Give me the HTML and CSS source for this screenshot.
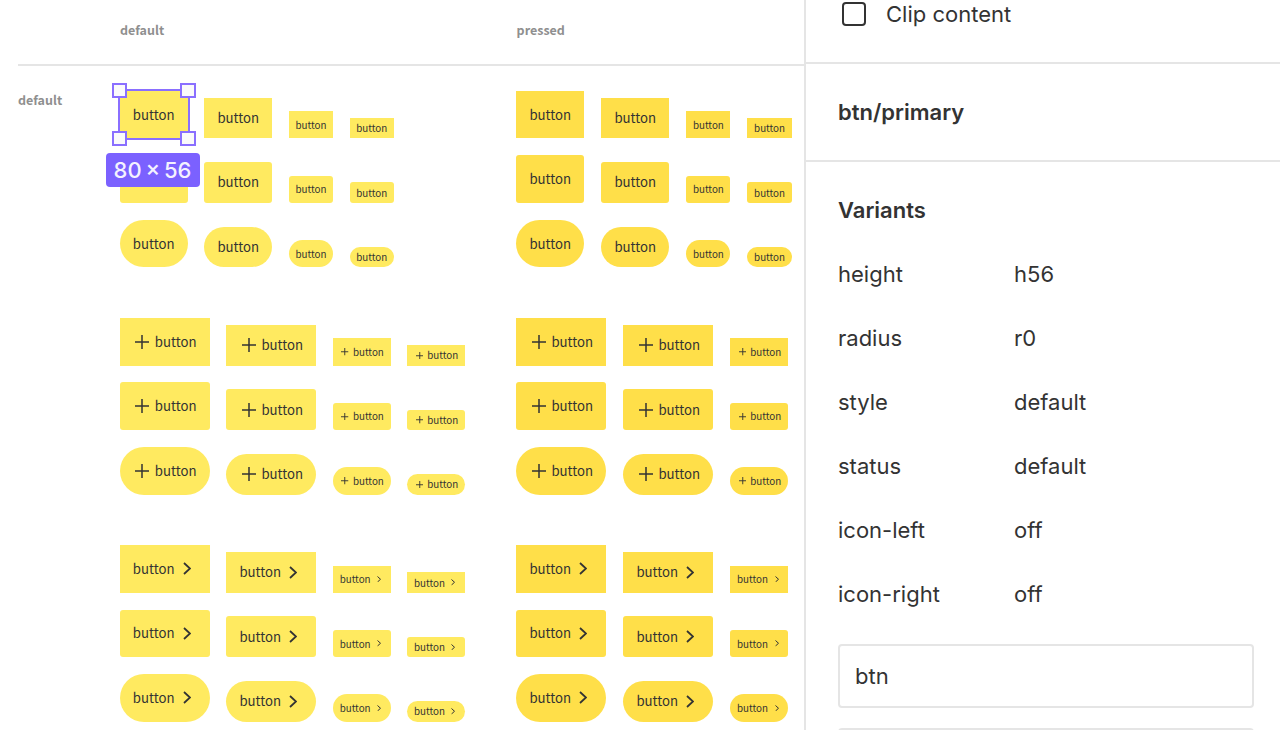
FILE: index.html
```html
<!DOCTYPE html>
<html>
<head>
<title>btn/primary</title>
<link rel="stylesheet" href="styles.css">
</head>
<body>

<svg class="icon-defs" width="0" height="0">
  <symbol id="plus" viewBox="0 0 14 14"><path d="M7 0V14M0 7H14"/></symbol>
  <symbol id="chevron" viewBox="0 0 8 13"><path d="M1 1L7 6.5L1 12"/></symbol>
</svg>

<main class="canvas">
  <header class="canvas-head">
    <span class="head-default">default</span>
    <span class="head-pressed">pressed</span>
  </header>

  <div class="canvas-body">
    <div class="row-label">default</div>

    <div class="matrix">
      <!-- text only -->
      <section class="group plain">
        <div class="btn h56 r0 selected">button
          <div class="sel-frame"></div>
          <i class="handle tl"></i><i class="handle tr"></i><i class="handle bl"></i><i class="handle br"></i>
          <div class="size-badge">80 × 56</div>
        </div>
        <div class="btn h48 r0">button</div>
        <div class="btn h32 r0 sm">button</div>
        <div class="btn h24 r0 sm">button</div>
        <div class="btn h56 r4"></div>
        <div class="btn h48 r4">button</div>
        <div class="btn h32 r4 sm">button</div>
        <div class="btn h24 r4 sm">button</div>
        <div class="btn h56 pill">button</div>
        <div class="btn h48 pill">button</div>
        <div class="btn h32 pill sm">button</div>
        <div class="btn h24 pill sm">button</div>
      </section>

      <!-- icon left -->
      <section class="group wide">
        <div class="btn h56 r0"><svg class="plus"><use href="#plus"/></svg>button</div>
        <div class="btn h48 r0"><svg class="plus"><use href="#plus"/></svg>button</div>
        <div class="btn h32 r0 sm"><svg class="plus"><use href="#plus"/></svg>button</div>
        <div class="btn h24 r0 sm"><svg class="plus"><use href="#plus"/></svg>button</div>
        <div class="btn h56 r4"><svg class="plus"><use href="#plus"/></svg>button</div>
        <div class="btn h48 r4"><svg class="plus"><use href="#plus"/></svg>button</div>
        <div class="btn h32 r4 sm"><svg class="plus"><use href="#plus"/></svg>button</div>
        <div class="btn h24 r4 sm"><svg class="plus"><use href="#plus"/></svg>button</div>
        <div class="btn h56 pill"><svg class="plus"><use href="#plus"/></svg>button</div>
        <div class="btn h48 pill"><svg class="plus"><use href="#plus"/></svg>button</div>
        <div class="btn h32 pill sm"><svg class="plus"><use href="#plus"/></svg>button</div>
        <div class="btn h24 pill sm"><svg class="plus"><use href="#plus"/></svg>button</div>
      </section>

      <!-- icon right -->
      <section class="group wide">
        <div class="btn h56 r0">button<svg class="chevron"><use href="#chevron"/></svg></div>
        <div class="btn h48 r0">button<svg class="chevron"><use href="#chevron"/></svg></div>
        <div class="btn h32 r0 sm">button<svg class="chevron"><use href="#chevron"/></svg></div>
        <div class="btn h24 r0 sm">button<svg class="chevron"><use href="#chevron"/></svg></div>
        <div class="btn h56 r4">button<svg class="chevron"><use href="#chevron"/></svg></div>
        <div class="btn h48 r4">button<svg class="chevron"><use href="#chevron"/></svg></div>
        <div class="btn h32 r4 sm">button<svg class="chevron"><use href="#chevron"/></svg></div>
        <div class="btn h24 r4 sm">button<svg class="chevron"><use href="#chevron"/></svg></div>
        <div class="btn h56 pill">button<svg class="chevron"><use href="#chevron"/></svg></div>
        <div class="btn h48 pill">button<svg class="chevron"><use href="#chevron"/></svg></div>
        <div class="btn h32 pill sm">button<svg class="chevron"><use href="#chevron"/></svg></div>
        <div class="btn h24 pill sm">button<svg class="chevron"><use href="#chevron"/></svg></div>
      </section>
    </div>

    <div class="matrix pressed">
      <section class="group plain">
        <div class="btn h56 r0">button</div>
        <div class="btn h48 r0">button</div>
        <div class="btn h32 r0 sm">button</div>
        <div class="btn h24 r0 sm">button</div>
        <div class="btn h56 r4">button</div>
        <div class="btn h48 r4">button</div>
        <div class="btn h32 r4 sm">button</div>
        <div class="btn h24 r4 sm">button</div>
        <div class="btn h56 pill">button</div>
        <div class="btn h48 pill">button</div>
        <div class="btn h32 pill sm">button</div>
        <div class="btn h24 pill sm">button</div>
      </section>

      <section class="group wide">
        <div class="btn h56 r0"><svg class="plus"><use href="#plus"/></svg>button</div>
        <div class="btn h48 r0"><svg class="plus"><use href="#plus"/></svg>button</div>
        <div class="btn h32 r0 sm"><svg class="plus"><use href="#plus"/></svg>button</div>
        <div class="btn h56 r4"><svg class="plus"><use href="#plus"/></svg>button</div>
        <div class="btn h48 r4"><svg class="plus"><use href="#plus"/></svg>button</div>
        <div class="btn h32 r4 sm"><svg class="plus"><use href="#plus"/></svg>button</div>
        <div class="btn h56 pill"><svg class="plus"><use href="#plus"/></svg>button</div>
        <div class="btn h48 pill"><svg class="plus"><use href="#plus"/></svg>button</div>
        <div class="btn h32 pill sm"><svg class="plus"><use href="#plus"/></svg>button</div>
      </section>

      <section class="group wide">
        <div class="btn h56 r0">button<svg class="chevron"><use href="#chevron"/></svg></div>
        <div class="btn h48 r0">button<svg class="chevron"><use href="#chevron"/></svg></div>
        <div class="btn h32 r0 sm">button<svg class="chevron"><use href="#chevron"/></svg></div>
        <div class="btn h56 r4">button<svg class="chevron"><use href="#chevron"/></svg></div>
        <div class="btn h48 r4">button<svg class="chevron"><use href="#chevron"/></svg></div>
        <div class="btn h32 r4 sm">button<svg class="chevron"><use href="#chevron"/></svg></div>
        <div class="btn h56 pill">button<svg class="chevron"><use href="#chevron"/></svg></div>
        <div class="btn h48 pill">button<svg class="chevron"><use href="#chevron"/></svg></div>
        <div class="btn h32 pill sm">button<svg class="chevron"><use href="#chevron"/></svg></div>
      </section>
    </div>
  </div>
</main>

<aside class="panel">
  <div class="panel-section clip-row">
    <span class="checkbox"></span>
    <span>Clip content</span>
  </div>
  <div class="panel-section name-row">btn/primary</div>
  <div class="variants">
    <h2>Variants</h2>
    <div class="prop"><span>height</span><span>h56</span></div>
    <div class="prop"><span>radius</span><span>r0</span></div>
    <div class="prop"><span>style</span><span>default</span></div>
    <div class="prop"><span>status</span><span>default</span></div>
    <div class="prop"><span>icon-left</span><span>off</span></div>
    <div class="prop"><span>icon-right</span><span>off</span></div>
    <div class="field">btn</div>
    <div class="field field-empty"></div>
  </div>
</aside>

</body>
</html>
```

FILE: styles.css
```css
body {
  margin: 0;
  display: flex;
  height: 730px;
  overflow: hidden;
  background: #fff;
  color: #333;
  font-family: "Inter", sans-serif;
}

.icon-defs {
  position: absolute;
}

/* Canvas */
.canvas {
  width: 804px;
  flex: none;
  overflow: hidden;
  border-right: 2px solid #e5e5e5;
  font-family: "Noto Sans CJK KR", sans-serif;
}

.canvas-head {
  display: flex;
  height: 64px;
  margin-left: 18px;
  border-bottom: 2px solid #e5e5e5;
  color: #8f8f8f;
  font-size: 12.5px;
  font-weight: 700;
  line-height: 60px;
}

.head-default {
  margin-left: 102px;
  width: 396.6px;
}

.canvas-body {
  display: flex;
  height: 664px;
  padding: 24.8px 0 0 18px;
  box-sizing: border-box;
  overflow: hidden;
}

.row-label {
  width: 101.7px;
  flex: none;
  color: #8f8f8f;
  font-size: 12.5px;
  font-weight: 700;
  line-height: 18px;
}

.matrix {
  width: 396.6px;
  flex: none;
  display: flex;
  flex-direction: column;
  gap: 50.6px;
}

.group {
  display: grid;
  grid-template-rows: repeat(3, 47.6px);
  row-gap: 16.9px;
  column-gap: 16.6px;
  align-items: end;
  justify-content: start;
}

.pressed .group {
  column-gap: 17px;
}

.group.plain {
  grid-template-columns: 68px 68px 44.2px 44.2px;
}

.group.wide {
  grid-template-columns: 90px 90px 58px 57.5px;
}

.pressed .group.wide {
  grid-template-columns: 90px 90px 58px;
}

/* Buttons */
.btn {
  display: flex;
  align-items: center;
  justify-content: center;
  position: relative;
  box-sizing: border-box;
  background: #ffea60;
  font-size: 13.2px;
  line-height: 18px;
  white-space: nowrap;
}

.pressed .btn {
  background: #ffdf49;
}

.h56 { height: 47.6px; }
.h48 { height: 40.8px; }
.h32 { height: 27.2px; }
.h24 { height: 20.4px; }

.r0 { border-radius: 0; }
.r4 { border-radius: 3px; }
.pill { border-radius: 24px; }

.btn.sm {
  font-size: 9.8px;
}

.plus, .chevron {
  flex: none;
  fill: none;
  stroke: #333;
}

.plus {
  width: 14px;
  height: 14px;
  margin: 0 5.5px 0 2.5px;
  stroke-width: 1.5;
}

.chevron {
  width: 8px;
  height: 13px;
  margin: 0 6px 0 8px;
  stroke-width: 1.8;
}

.sm .plus {
  width: 7.5px;
  height: 7.5px;
  margin: 0 4px 0 1.5px;
  stroke-width: 1.7;
}

.sm .chevron {
  width: 4px;
  height: 6.5px;
  margin: 0 3px 0 6.5px;
  stroke-width: 2;
}

/* Selection on the first button */
.selected {
  z-index: 2;
}

.sel-frame {
  position: absolute;
  inset: -1.5px -2px;
  border: 2.4px solid #8a6fff;
}

.handle {
  position: absolute;
  width: 15.5px;
  height: 15.5px;
  box-sizing: border-box;
  background: #fafafa;
  border: 2.4px solid #8a6fff;
}

.handle.tl { left: -8px; top: -8px; }
.handle.tr { right: -8px; top: -8px; }
.handle.bl { left: -8px; bottom: -8px; }
.handle.br { right: -8px; bottom: -8px; }

.size-badge {
  position: absolute;
  left: -14.2px;
  top: 62.2px;
  width: 94px;
  height: 34px;
  border-radius: 4px;
  background: #7b61ff;
  color: #f4f2ff;
  font-family: "Inter", sans-serif;
  font-size: 22px;
  font-weight: 500;
  line-height: 34px;
  text-align: center;
  word-spacing: -2px;
}

/* Right panel */
.panel {
  flex: 1;
  font-size: 22px;
  line-height: 28px;
}

.panel-section {
  padding: 0 32px;
  border-bottom: 2px solid #e5e5e5;
}

.clip-row {
  display: flex;
  align-items: center;
  height: 64px;
  box-sizing: border-box;
  padding: 0 0 34px 36px;
}

.checkbox {
  width: 24px;
  height: 24px;
  box-sizing: border-box;
  margin-right: 20px;
  border: 2px solid #333;
  border-radius: 4px;
}

.name-row {
  height: 96px;
  line-height: 96px;
  font-weight: 600;
}

.variants {
  padding: 16px 26px 0 32px;
}

.variants h2 {
  margin: 0;
  font-size: 22px;
  font-weight: 600;
  line-height: 64px;
}

.prop {
  display: flex;
  height: 64px;
  align-items: center;
}

.prop span:first-child {
  width: 176px;
}

.field {
  height: 64px;
  box-sizing: border-box;
  margin-top: 18px;
  padding-left: 15px;
  border: 2px solid #e5e5e5;
  border-radius: 4px;
  line-height: 60px;
}

.field-empty {
  margin-top: 20px;
}
```
